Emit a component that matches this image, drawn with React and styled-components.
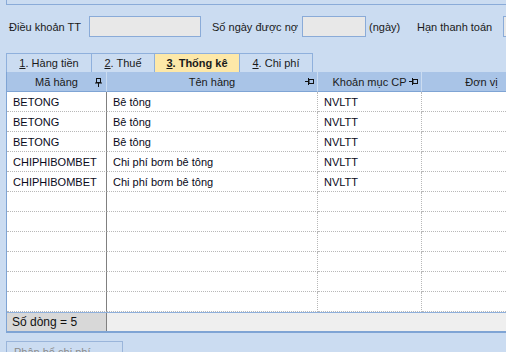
import React from 'react'
import styled, { createGlobalStyle } from 'styled-components'

const Global = createGlobalStyle`
  html, body { margin: 0; padding: 0; background: #cbdcf1; }
  body { font-family: 'Liberation Sans', Arial, sans-serif; font-size: 11px; color: #111; }
  #root { width: 506px; height: 352px; overflow: hidden; }
`

const Page = styled.div`
  width: 506px;
  height: 352px;
  overflow: hidden;
  display: flex;
  flex-direction: column;
  background: #cbdcf1;
`
const TopBox = styled.div`
  flex: none;
  margin-left: 6px;
  height: 4px;
  border-left: 1px solid #8aabd8;
  border-bottom: 1px solid #8aabd8;
`
const FormRow = styled.div`
  flex: none;
  display: flex;
  align-items: center;
  margin-top: 11px;
  height: 21px;
  padding-left: 9px;
  white-space: nowrap;
`
const Label = styled.span`
  flex: none;
  width: ${p => p.w}px;
  margin-left: ${p => p.ml || 0}px;
  color: #1a1a1a;
`
const Input = styled.div`
  flex: none;
  box-sizing: border-box;
  width: ${p => p.w}px;
  height: 21px;
  background: #e8e8e8;
  border: 1px solid #8aabd8;
`
const Tabs = styled.div`
  flex: none;
  display: flex;
  margin: 16px 0 0 6px;
  height: 19px;
`
const Tab = styled.div`
  box-sizing: border-box;
  width: ${p => p.w}px;
  height: 19px;
  border: 1px solid #8fb0dc;
  border-bottom: none;
  border-left: ${p => (p.first ? '1px solid #8fb0dc' : 'none')};
  background: ${p => (p.active ? '#fde8a8' : '#cbdcf1')};
  font-weight: ${p => (p.active ? 700 : 400)};
  color: #1a1a1a;
  display: flex;
  align-items: center;
  justify-content: center;
  u { text-decoration: underline; }
`
const Grid = styled.div`
  flex: none;
  margin-left: 6px;
  border-left: 1px solid #7fa4d4;
  background: #fff;
  display: flex;
  flex-direction: column;
`
const Row = styled.div`
  display: grid;
  grid-template-columns: 100px 211px 104px 120px;
`
const HeadCell = styled.div`
  position: relative;
  box-sizing: border-box;
  height: 20px;
  background: #a9c4e7;
  border-right: 1px solid #cbdcf1;
  border-bottom: 1px solid #7fa4d4;
  display: flex;
  align-items: center;
  justify-content: center;
  color: #1a1a1a;
  svg { position: absolute; right: ${p => (p.vpin ? 4 : 3)}px; top: 6px; }
`
const Cell = styled.div`
  box-sizing: border-box;
  height: 20px;
  padding-left: 6px;
  display: flex;
  align-items: center;
  border-bottom: 1px dotted #b8b8b8;
  border-right: ${p => (p.fixed ? '1px solid #808080' : '1px dotted #b8b8b8')};
  color: #0a0a20;
`
const Footer = styled.div`
  display: grid;
  grid-template-columns: 100px 1fr;
  height: 18px;
  border-top: 1px solid #8fb0dc;
  border-bottom: 2px solid #7fa4d4;
  background: #efefef;
`
const FooterCell = styled.div`
  background: #d8d8d8;
  border-right: 1px solid #808080;
  padding-left: 5px;
  display: flex;
  align-items: center;
  color: #111;
  font-size: 12px;
`
const Button = styled.div`
  flex: none;
  margin: 8px 0 0 6px;
  width: 117px;
  height: 20px;
  box-sizing: border-box;
  border: 1px solid #9ab5da;
  padding: 4px 0 0 7px;
  color: #8c8c8c;
`

const PinV = () => (
  <svg width="7" height="9" viewBox="0 0 7 9">
    <rect x="1.5" y="0.5" width="4" height="4" fill="none" stroke="#111" />
    <line x1="0" y1="5" x2="7" y2="5" stroke="#111" />
    <line x1="3.5" y1="5" x2="3.5" y2="9" stroke="#111" />
  </svg>
)
const PinH = () => (
  <svg width="9" height="7" viewBox="0 0 9 7">
    <line x1="0" y1="3.5" x2="3" y2="3.5" stroke="#111" />
    <line x1="3.5" y1="0" x2="3.5" y2="7" stroke="#111" />
    <rect x="4" y="1.5" width="4.5" height="4" fill="none" stroke="#111" />
  </svg>
)

const rows = [
  ['BETONG', 'Bê tông', 'NVLTT'],
  ['BETONG', 'Bê tông', 'NVLTT'],
  ['BETONG', 'Bê tông', 'NVLTT'],
  ['CHIPHIBOMBET', 'Chi phí bơm bê tông', 'NVLTT'],
  ['CHIPHIBOMBET', 'Chi phí bơm bê tông', 'NVLTT'],
]
while (rows.length < 11) rows.push(['', '', ''])

const App = () => (
  <Page>
    <Global />
    <TopBox />
    <FormRow>
      <Label w={80}>Điều khoản TT</Label>
      <Input w={112} />
      <Label w={90} ml={11}>Số ngày được nợ</Label>
      <Input w={64} />
      <Label w={48} ml={3}>(ngày)</Label>
      <Label w={86}>Hạn thanh toán</Label>
      <Input w={100} />
    </FormRow>
    <Tabs>
      <Tab w={86} first><span><u>1</u>. Hàng tiền</span></Tab>
      <Tab w={63}><span><u>2</u>. Thuế</span></Tab>
      <Tab w={85} active><span><u>3</u>. Thống kê</span></Tab>
      <Tab w={73}><span><u>4</u>. Chi phí</span></Tab>
    </Tabs>
    <Grid>
      <Row>
        <HeadCell vpin>Mã hàng<PinV /></HeadCell>
        <HeadCell>Tên hàng<PinH /></HeadCell>
        <HeadCell>Khoản mục CP<PinH /></HeadCell>
        <HeadCell>Đơn vị</HeadCell>
      </Row>
      {rows.map((r, i) => (
        <Row key={i}>
          <Cell fixed>{r[0]}</Cell>
          <Cell>{r[1]}</Cell>
          <Cell>{r[2]}</Cell>
          <Cell />
        </Row>
      ))}
      <Footer>
        <FooterCell>Số dòng = 5</FooterCell>
        <div />
      </Footer>
    </Grid>
    <Button>Phân bổ chi phí</Button>
  </Page>
)

export default App
